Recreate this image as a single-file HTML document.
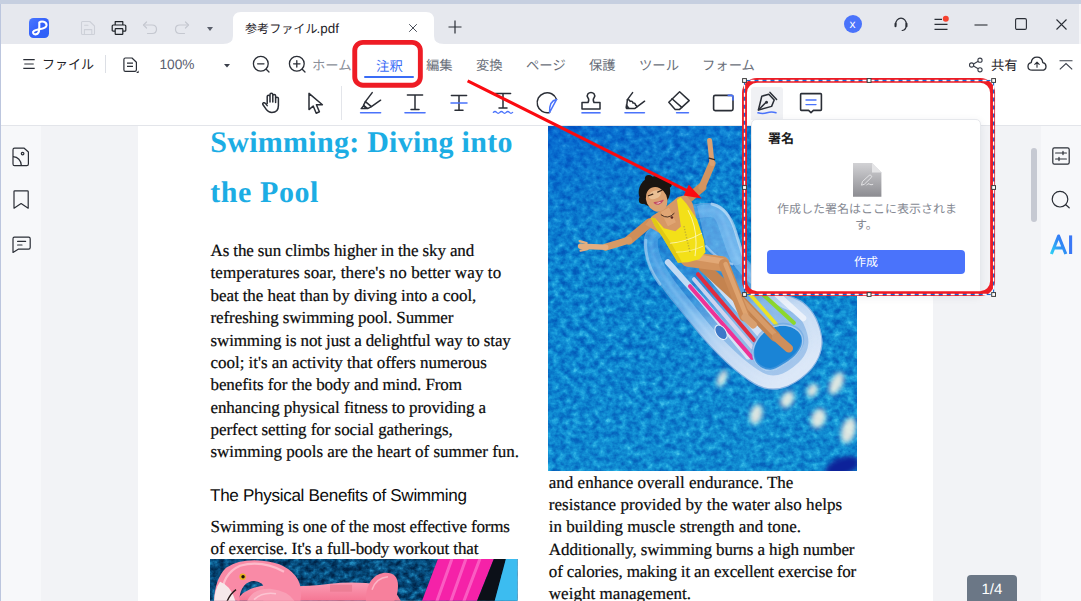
<!DOCTYPE html>
<html lang="ja">
<head>
<meta charset="utf-8">
<title>PDF editor</title>
<style>
*{box-sizing:border-box;margin:0;padding:0}
html,body{width:1081px;height:601px;overflow:hidden;background:#fff}
body{position:relative;font-family:"Liberation Sans",sans-serif;color:#1f2329;text-rendering:geometricPrecision}
.a{position:absolute;display:block}
.ic{position:absolute;overflow:visible}
.ic *{vector-effect:none}
.t{position:absolute;white-space:nowrap;line-height:1}
.bt{position:absolute;left:210.5px;white-space:nowrap;font-family:"Liberation Serif",serif;font-size:17px;line-height:20px;color:#0a0a0a;-webkit-text-stroke:0.22px #0a0a0a}
.rt{left:548.8px}
.jt{font-family:"Liberation Sans","Noto Sans CJK JP",sans-serif}
</style>
</head>
<body>

<!-- ======= window chrome ======= -->
<div class="a" id="topstrip" style="left:0;top:0;width:1081px;height:4px;background:#c6cfe0"></div>
<div class="a" id="titlebar" style="left:0;top:4px;width:1081px;height:40px;background:#e6e8ee"></div>
<div class="a" id="menubar" style="left:0;top:44px;width:1081px;height:82px;background:#fff;border-bottom:1px solid #e3e5ea"></div>
<div class="a" id="rightedge" style="left:1079px;top:4px;width:2px;height:40px;background:#f4f5f8"></div>

<!-- tab -->
<svg class="a" style="left:223px;top:10px" width="222" height="35" viewBox="223 10 222 35">
  <path d="M223 44 Q233 44 233 36 L233 20 Q233 12 241 12 L426 12 Q434 12 434 20 L434 36 Q434 44 444 44 L444 45 L223 45 Z" fill="#fff"/>
</svg>
<svg class="a" role="img" aria-label="参考ファイル" style="left:243.10px;top:20.09px;" width="76.60" height="18.15" viewBox="-2 -13.31 76.60 18.15"><text class="jt" x="0" y="0" font-size="12.1" fill="#1f2329">参考ファイル</text></svg>
<span class="t" style="left:316.6px;top:21.7px;font-size:13.4px;color:#1f2329">.pdf</span>
<svg class="ic" style="left:408px;top:23px" width="10" height="10" viewBox="0 0 10 10"><path d="M1.2 1.2 L8.8 8.8 M8.8 1.2 L1.2 8.8" stroke="#4a4f5a" stroke-width="1" fill="none"/></svg>
<svg class="ic" style="left:448px;top:20px" width="14" height="14" viewBox="0 0 14 14"><path d="M7 0.5 V13.5 M0.5 7 H13.5" stroke="#2a2e36" stroke-width="1.2" fill="none"/></svg>

<!-- logo -->
<svg class="ic" style="left:29px;top:18px" width="20" height="20" viewBox="0 0 20 20">
  <defs><linearGradient id="lg" x1="0" y1="0" x2="1" y2="1"><stop offset="0" stop-color="#4a78ff"/><stop offset="0.5" stop-color="#3460fb"/><stop offset="1" stop-color="#2c62f6"/></linearGradient></defs>
  <rect x="0" y="0" width="20" height="20" rx="4.5" fill="url(#lg)"/>
  <path d="M10.3 4.6 C12.2 2.7 17.9 3.3 17.5 7.4 C17.1 10.7 12.6 10.9 9 11.5 C5.6 12.1 3.5 13.3 4.1 15 C4.8 17 8.4 16.9 9.6 14.3 C10.5 12.2 10.3 8 10.3 4.6 Z" fill="none" stroke="#fff" stroke-width="2.1" stroke-linecap="round" stroke-linejoin="round"/>
</svg>
<!-- save (disabled) -->
<svg class="ic" style="left:80px;top:20px" width="16" height="16" viewBox="0 0 16 16" fill="none" stroke="#cdd0d8" stroke-width="1.05" stroke-linejoin="round" stroke-linecap="round">
  <path d="M2.5 1.5 H9.8 L14.5 6 V13.5 Q14.5 14.5 13.5 14.5 H2.5 Q1.5 14.5 1.5 13.5 V2.5 Q1.5 1.5 2.5 1.5 Z"/><path d="M4.6 5.2 H8"/><rect x="4.4" y="9.6" width="7.4" height="4.9"/>
</svg>
<!-- print -->
<svg class="ic" style="left:111px;top:20px" width="16" height="16" viewBox="0 0 16 16" fill="none" stroke="#1f2329" stroke-width="1.2" stroke-linejoin="round">
  <path d="M4.2 5 V1.7 H11.8 V5"/><path d="M4.2 11.2 H2.2 Q1.2 11.2 1.2 10.2 V6 Q1.2 5 2.2 5 H13.8 Q14.8 5 14.8 6 V10.2 Q14.8 11.2 13.8 11.2 H11.8"/><rect x="4.2" y="8.6" width="7.6" height="5.8" rx="0.6"/>
</svg>
<!-- undo / redo (disabled) -->
<svg class="ic" style="left:142px;top:20px" width="16" height="16" viewBox="0 0 16 16" fill="none" stroke="#c5c8d0" stroke-width="1.2" stroke-linecap="round" stroke-linejoin="round">
  <path d="M4.5 2 L1.5 5 L4.5 8"/><path d="M1.8 5 H10 Q14.5 5 14.5 9.2 Q14.5 13.5 10 13.5 H5.5"/>
</svg>
<svg class="ic" style="left:174px;top:20px" width="16" height="16" viewBox="0 0 16 16" fill="none" stroke="#c5c8d0" stroke-width="1.2" stroke-linecap="round" stroke-linejoin="round">
  <path d="M11.5 2 L14.5 5 L11.5 8"/><path d="M14.2 5 H6 Q1.5 5 1.5 9.2 Q1.5 13.5 6 13.5 H10.5"/>
</svg>
<svg class="ic" style="left:207px;top:26.5px" width="6" height="4" viewBox="0 0 6 4"><path d="M0 0 H6 L3 4 Z" fill="#5a5f6b"/></svg>

<!-- window controls -->
<div class="a" style="left:844px;top:15px;width:18.4px;height:18.4px;border-radius:50%;background:#4a73fb"></div>
<span class="t" style="left:849.6px;top:17.8px;font-size:12px;color:#fff">x</span>
<svg class="ic" style="left:893px;top:16.5px" width="16" height="16" viewBox="0 0 16 16" fill="none" stroke="#2a2e36" stroke-width="1.2" stroke-linecap="round">
  <path d="M2.7 7.9 V7 A5.3 5.9 0 0 1 13.3 7 V7.9 Q13.4 12.6 9.2 13.5"/><path d="M2.5 6.7 V9.3" stroke-width="2"/><path d="M13.5 6.7 V9.3" stroke-width="2"/>
</svg>
<svg class="ic" style="left:934px;top:15px" width="16" height="18" viewBox="0 0 16 18" fill="none" stroke="#2a2e36" stroke-width="1.2">
  <path d="M0.5 4.4 H8 M0.5 9.4 H13.5 M0.5 14.4 H13.5"/><circle cx="11.8" cy="3.8" r="3" fill="#f5412f" stroke="none"/>
</svg>
<svg class="ic" style="left:974px;top:23.5px" width="14" height="2" viewBox="0 0 14 2"><path d="M0.5 1 H13.5" stroke="#2a2e36" stroke-width="1.1"/></svg>
<svg class="ic" style="left:1015px;top:18px" width="12" height="12" viewBox="0 0 12 12"><rect x="0.6" y="0.6" width="10.8" height="10.8" rx="1.4" fill="none" stroke="#2a2e36" stroke-width="1.1"/></svg>
<svg class="ic" style="left:1056px;top:19px" width="11" height="11" viewBox="0 0 11 11"><path d="M0.5 0.5 L10.5 10.5 M10.5 0.5 L0.5 10.5" stroke="#2a2e36" stroke-width="1.1" fill="none"/></svg>

<!-- ======= menu row ======= -->
<svg class="ic" style="left:22.5px;top:58px" width="12" height="12" viewBox="0 0 12 12"><path d="M0.3 1.6 H11.7 M1.3 6 H10.7 M0.3 10.4 H11.7" stroke="#2a2e36" stroke-width="1.1" fill="none"/></svg>
<svg class="a" role="img" aria-label="ファイル" style="left:40.00px;top:55.20px;" width="56.00" height="19.50" viewBox="-2 -14.30 56.00 19.50"><text class="jt" x="0" y="0" font-size="13" fill="#1f2329">ファイル</text></svg>
<div class="a" style="left:105px;top:54.5px;width:1px;height:18.5px;background:#dcdfe5"></div>
<svg class="ic" style="left:122.5px;top:56.5px" width="16" height="17" viewBox="0 0 16 17" fill="none" stroke="#2a2e36" stroke-width="1.2" stroke-linejoin="round">
  <path d="M2.4 1 H9 L13.4 5.2 V12.8 Q13.4 14.4 11.8 14.4 H2.4 Q0.9 14.4 0.9 12.8 V2.5 Q0.9 1 2.4 1 Z"/><path d="M4 6.2 H10 M4 9.4 H10"/><path d="M15.6 13.6 V16 H13.2 Z" fill="#2a2e36" stroke="none"/>
</svg>
<span class="t" style="left:159.5px;top:57.8px;font-size:13.7px;color:#596070">100%</span>
<svg class="ic" style="left:224px;top:63.8px" width="6" height="4" viewBox="0 0 6 4"><path d="M0 0 H6 L3 3.6 Z" fill="#3a3f4a"/></svg>
<svg class="ic" style="left:252px;top:55px" width="19" height="19" viewBox="0 0 19 19" fill="none" stroke="#2a2e36" stroke-width="1.3" stroke-linecap="round">
  <circle cx="8.8" cy="8.8" r="7.4"/><path d="M5.6 8.8 H12 M14.2 14.2 L17 17"/>
</svg>
<svg class="ic" style="left:288px;top:55px" width="19" height="19" viewBox="0 0 19 19" fill="none" stroke="#2a2e36" stroke-width="1.3" stroke-linecap="round">
  <circle cx="8.8" cy="8.8" r="7.4"/><path d="M5.6 8.8 H12 M8.8 5.6 V12 M14.2 14.2 L17 17"/>
</svg>
<svg class="a" role="img" aria-label="ホーム" style="left:310.20px;top:55.34px;" width="43.99" height="20.00" viewBox="-2 -14.66 43.99 20.00"><text class="jt" x="0" y="0" font-size="13.33" fill="#8a8f99">ホーム</text></svg>
<svg class="a" role="img" aria-label="注釈" style="left:373.80px;top:55.66px;" width="30.80" height="20.10" viewBox="-2 -14.74 30.80 20.10"><text class="jt" x="0" y="0" font-size="13.4" fill="#3a6cf6">注釈</text></svg>
<div class="a" style="left:364.2px;top:76px;width:49.8px;height:2px;background:#3a6cf6;border-radius:1px"></div>
<svg class="a" role="img" aria-label="編集" style="left:424.00px;top:55.34px;" width="30.66" height="20.00" viewBox="-2 -14.66 30.66 20.00"><text class="jt" x="0" y="0" font-size="13.33" fill="#6a6f7a">編集</text></svg><svg class="a" role="img" aria-label="変換" style="left:474.00px;top:55.34px;" width="30.66" height="20.00" viewBox="-2 -14.66 30.66 20.00"><text class="jt" x="0" y="0" font-size="13.33" fill="#6a6f7a">変換</text></svg><svg class="a" role="img" aria-label="ページ" style="left:524.00px;top:55.34px;" width="43.99" height="20.00" viewBox="-2 -14.66 43.99 20.00"><text class="jt" x="0" y="0" font-size="13.33" fill="#6a6f7a">ページ</text></svg><svg class="a" role="img" aria-label="保護" style="left:587.00px;top:55.34px;" width="30.66" height="20.00" viewBox="-2 -14.66 30.66 20.00"><text class="jt" x="0" y="0" font-size="13.33" fill="#6a6f7a">保護</text></svg><svg class="a" role="img" aria-label="ツール" style="left:637.00px;top:55.34px;" width="43.99" height="20.00" viewBox="-2 -14.66 43.99 20.00"><text class="jt" x="0" y="0" font-size="13.33" fill="#6a6f7a">ツール</text></svg><svg class="a" role="img" aria-label="フォーム" style="left:700.00px;top:55.34px;" width="57.32" height="20.00" viewBox="-2 -14.66 57.32 20.00"><text class="jt" x="0" y="0" font-size="13.33" fill="#6a6f7a">フォーム</text></svg>
<!-- share -->
<svg class="ic" style="left:968px;top:56.5px" width="16" height="16" viewBox="0 0 16 16" fill="none" stroke="#3a3f4a" stroke-width="1.1">
  <circle cx="3.6" cy="8" r="2.1"/><circle cx="12" cy="3.2" r="2.1"/><circle cx="12" cy="12.8" r="2.1"/><path d="M5.5 7 L10.2 4.2 M5.5 9 L10.2 11.8"/>
</svg>
<svg class="a" role="img" aria-label="共有" style="left:989.00px;top:55.34px;" width="30.66" height="20.00" viewBox="-2 -14.66 30.66 20.00"><text class="jt" x="0" y="0" font-size="13.33" fill="#1f2329">共有</text></svg>
<svg class="ic" style="left:1027px;top:56px" width="20" height="16" viewBox="0 0 20 16" fill="none" stroke="#2a2e36" stroke-width="1.3" stroke-linecap="round" stroke-linejoin="round">
  <path d="M5.2 14.2 Q1 14.2 1 10.4 Q1 7.2 4.2 6.6 Q5 1.2 10 1.2 Q15 1.2 15.8 6.6 Q19 7.2 19 10.4 Q19 14.2 14.8 14.2 Z"/><path d="M10 11.2 V6.4 M7.8 8.4 L10 6.2 L12.2 8.4" stroke-width="1.1"/>
</svg>
<svg class="ic" style="left:1059px;top:57px" width="14" height="14" viewBox="0 0 14 14" fill="none" stroke="#3a3f4a" stroke-width="1.1"><path d="M0.5 3.7 H13.5 M0.8 12.4 L7 6.6 L13.2 12.4"/></svg>

<!-- ======= annotation toolbar icons ======= -->
<!-- hand -->
<svg class="ic" style="left:261px;top:92px" width="21" height="22" viewBox="0 0 21 22" fill="none" stroke="#2a2e36" stroke-width="1.5" stroke-linecap="round" stroke-linejoin="round">
  <path d="M6.2 11.5 V4.6 Q6.2 3.2 7.6 3.2 Q9 3.2 9 4.6 V10 M9 9.8 V2.6 Q9 1.2 10.4 1.2 Q11.8 1.2 11.8 2.6 V10 M11.8 10 V3.8 Q11.8 2.5 13.2 2.5 Q14.6 2.5 14.6 3.8 V10.6 M14.6 10.6 V6.6 Q14.6 5.3 16 5.3 Q17.4 5.3 17.4 6.6 V13.4 Q17.4 20.4 10.8 20.4 Q7.4 20.4 5.4 17.6 L2 12.8 Q1.2 11.4 2.4 10.8 Q3.6 10.3 4.6 11.6 L6.2 13.6"/>
</svg>
<!-- cursor -->
<svg class="ic" style="left:307px;top:92px" width="18" height="23" viewBox="0 0 18 23" fill="none" stroke="#2a2e36" stroke-width="1.5" stroke-linejoin="round">
  <path d="M2 1.4 V17.6 L6.2 14 L9.2 21.2 L12.4 19.8 L9.4 12.8 L15.4 12.8 Z"/>
</svg>
<div class="a" style="left:341px;top:86px;width:1px;height:34px;background:#e3e5ea"></div>
<!-- highlighter -->
<svg class="ic" style="left:360px;top:91px" width="22" height="24" viewBox="0 0 22 24" fill="none" stroke="#2a2e36" stroke-width="1.5" stroke-linecap="round" stroke-linejoin="round">
  <path d="M12.2 1.6 L5.4 10.6 L11.4 15.6 L20.6 9.2"/><path d="M5.4 10.6 L3.6 14.2 L7.6 17.6 L11.4 15.6"/><path d="M3.6 14.6 L1.2 17.6 H6.6 Z"/>
  <path d="M0.6 21.8 H20.6" stroke="#4a73fb" stroke-width="1.6"/>
</svg>
<!-- T underline -->
<svg class="ic" style="left:404px;top:91px" width="22" height="24" viewBox="0 0 22 24" fill="none" stroke="#2a2e36" stroke-width="1.5" stroke-linecap="round">
  <path d="M3.4 4 H18.6 M11 4 V18.2 M7 18.4 H15"/><path d="M1 21.8 H21" stroke="#4a73fb" stroke-width="1.6"/>
</svg>
<!-- T strike -->
<svg class="ic" style="left:448px;top:91px" width="22" height="24" viewBox="0 0 22 24" fill="none" stroke="#2a2e36" stroke-width="1.5" stroke-linecap="round">
  <path d="M3.4 4.6 H18.6 M11 4.6 V19 M7 19.2 H15"/><path d="M3 12 H19" stroke="#4a73fb" stroke-width="1.5"/>
</svg>
<!-- T squiggle -->
<svg class="ic" style="left:492px;top:91px" width="22" height="24" viewBox="0 0 22 24" fill="none" stroke="#2a2e36" stroke-width="1.5" stroke-linecap="round">
  <path d="M3.4 2.6 H18.6 M11 2.6 V16.8 M7 17 H15"/><path d="M1.4 21.4 Q3 19.6 4.6 21.4 T7.8 21.4 T11 21.4 T14.2 21.4 T17.4 21.4 T20.6 21.4" stroke="#4a73fb" stroke-width="1.3"/>
</svg>
<!-- sticker -->
<svg class="ic" style="left:535px;top:91px" width="24" height="24" viewBox="0 0 24 24" fill="none" stroke="#2a2e36" stroke-width="1.5" stroke-linecap="round" stroke-linejoin="round">
  <path d="M21.6 8.4 A10 10 0 1 0 14.6 21.4"/><path d="M21.6 8.4 Q14 9.6 14.6 21.4 Z" stroke="#4a73fb"/>
</svg>
<!-- stamp -->
<svg class="ic" style="left:580px;top:91px" width="22" height="24" viewBox="0 0 22 24" fill="none" stroke="#2a2e36" stroke-width="1.5" stroke-linejoin="round">
  <path d="M8 11.6 Q9.6 8.6 7.8 6.6 Q6.6 4.6 8 2.8 Q9.2 1.4 11 1.4 Q12.8 1.4 14 2.8 Q15.4 4.6 14.2 6.6 Q12.4 8.6 14 11.6 H20 V18 H2 V11.6 Z"/><path d="M1.4 21.8 H20.6" stroke="#4a73fb" stroke-width="1.6"/>
</svg>
<!-- pencil draw -->
<svg class="ic" style="left:624px;top:91px" width="22" height="24" viewBox="0 0 22 24" fill="none" stroke="#2a2e36" stroke-width="1.5" stroke-linecap="round" stroke-linejoin="round">
  <path d="M8.6 1.6 L3.4 8.6 L2.4 17.4 H11 L20.6 10.2"/><path d="M3.4 8.8 Q5.4 8.2 6.2 10.4 Q8.4 9.6 9 12 Q11.2 11.6 11.6 14.2 Q13 14.4 12.6 16"/>
  <path d="M2.6 14 L5 16.8 H2.4 Z" fill="#2a2e36" stroke-width="1"/>
  <path d="M1 21.8 H20.4" stroke="#4a73fb" stroke-width="1.6"/>
</svg>
<!-- eraser -->
<svg class="ic" style="left:667px;top:90px" width="24" height="25" viewBox="0 0 24 25" fill="none" stroke="#2a2e36" stroke-width="1.5" stroke-linejoin="round" stroke-linecap="round">
  <path d="M12.6 1.8 L22.2 10.6 L12.6 19.4 H8.2 L1.8 12.2 Z"/><path d="M5 8.8 L14.8 17.4"/><path d="M9.6 22.8 H21.4" stroke="#4a73fb" stroke-width="1.6"/>
</svg>
<!-- rectangle -->
<svg class="ic" style="left:712px;top:93px" width="23" height="19" viewBox="0 0 23 19" fill="none" stroke-width="1.6" stroke-linejoin="round">
  <rect x="1.6" y="2.4" width="19.4" height="15.2" rx="1.6" stroke="#2a2e36"/><path d="M15.6 2.4 H19.4 Q21 2.4 21 4 V7.6" stroke="#4a73fb"/>
</svg>

<!-- ======= left / right side bars & canvas ======= -->
<div class="a" id="canvas" style="left:0;top:126px;width:1081px;height:475px;background:#f2f3f6"></div>
<div class="a" id="leftbar" style="left:0;top:126px;width:41px;height:475px;background:#f7f8fa"></div>
<div class="a" id="leftedge" style="left:0;top:4px;width:1px;height:597px;background:#bcc6de"></div>
<div class="a" id="rightbar" style="left:1041px;top:126px;width:40px;height:475px;background:#f7f8fa"></div>
<div class="a" id="pagebg" style="left:138px;top:126px;width:795px;height:475px;background:#fff"></div>

<!-- left bar icons -->
<svg class="ic" style="left:12px;top:146.5px" width="18" height="20" viewBox="0 0 18 20" fill="none" stroke="#2a2e36" stroke-width="1.2" stroke-linejoin="round">
  <path d="M2.6 1.2 H12.2 L16.4 5 V17 Q16.4 18.6 14.8 18.6 H2.6 Q1 18.6 1 17 V2.8 Q1 1.2 2.6 1.2 Z"/><path d="M1 9.6 Q8.6 10.2 9.4 18.6"/><circle cx="10.6" cy="6.6" r="1.3"/>
</svg>
<svg class="ic" style="left:12.5px;top:190px" width="17" height="20" viewBox="0 0 17 20" fill="none" stroke="#2a2e36" stroke-width="1.2" stroke-linejoin="round">
  <path d="M1 1.6 Q1 0.8 1.8 0.8 H14.4 Q15.2 0.8 15.2 1.6 V18.2 L8.1 13.6 L1 18.2 Z"/>
</svg>
<svg class="ic" style="left:11.5px;top:236px" width="20" height="18" viewBox="0 0 20 18" fill="none" stroke="#2a2e36" stroke-width="1.2" stroke-linejoin="round" stroke-linecap="round">
  <path d="M2.4 1.2 H16.6 Q18.2 1.2 18.2 2.8 V11.6 Q18.2 13.2 16.6 13.2 H6.2 L1 16.4 L1 2.8 Q1 1.2 2.4 1.2 Z"/><path d="M5.6 5.4 H13.6 M5.6 9 H10"/>
</svg>

<!-- right bar -->
<div class="a" style="left:1031px;top:148px;width:6px;height:74px;border-radius:3px;background:#c6c9d2"></div>
<svg class="ic" style="left:1051.5px;top:146.5px" width="18" height="18" viewBox="0 0 18 18" fill="none" stroke="#2a2e36" stroke-width="1.2" stroke-linecap="round">
  <rect x="0.8" y="0.8" width="16.4" height="16.4" rx="1.6"/><path d="M3.6 6 H14.4 M3.6 12 H14.4 M11 4.4 V7.6 M7 10.4 V13.6"/>
</svg>
<svg class="ic" style="left:1051px;top:190px" width="20" height="20" viewBox="0 0 20 20" fill="none" stroke="#2a2e36" stroke-width="1.2" stroke-linecap="round">
  <circle cx="9" cy="9.2" r="7.8"/><path d="M14.8 14.8 L18.2 17.8"/>
</svg>
<svg class="ic" style="left:1050px;top:234px" width="24" height="22" viewBox="0 0 24 22">
  <defs><linearGradient id="ai" x1="0" y1="1" x2="1" y2="0"><stop offset="0" stop-color="#2fd0f5"/><stop offset="0.55" stop-color="#2f8df5"/><stop offset="1" stop-color="#3a6cf6"/></linearGradient></defs>
  <path d="M1.4 20 L8.6 2 L15.8 20 M4.2 14 H13" fill="none" stroke="url(#ai)" stroke-width="3.1" stroke-linejoin="round" stroke-linecap="butt"/>
  <path d="M20.6 1.4 V20" fill="none" stroke="#3a78f6" stroke-width="3.1"/>
</svg>

<!-- page badge -->
<div class="a" style="left:967px;top:575px;width:50px;height:30px;border-radius:4px;background:#6b7786"></div>
<span class="t" style="left:981.4px;top:582.4px;font-size:15px;color:#fff">1/4</span>

<!-- ======= document content ======= -->
<div id="doc">
<span class="t" id="h1a" style="letter-spacing:0.271px;left:210.3px;top:127.8px;font-family:'Liberation Serif',serif;font-weight:bold;font-size:30px;color:#1cade4;line-height:30px">Swimming: Diving into</span>
<span class="t" id="h1b" style="letter-spacing:0.555px;left:210.3px;top:178.4px;font-family:'Liberation Serif',serif;font-weight:bold;font-size:30px;color:#1cade4;line-height:30px">the Pool</span>

<span class="bt" style="letter-spacing:-0.118px;top:241.05px">As the sun climbs higher in the sky and</span>
<span class="bt" style="letter-spacing:0.110px;top:263.42px">temperatures soar, there's no better way to</span>
<span class="bt" style="letter-spacing:-0.069px;top:285.79px">beat the heat than by diving into a cool,</span>
<span class="bt" style="letter-spacing:-0.082px;top:308.16px">refreshing swimming pool. Summer</span>
<span class="bt" style="letter-spacing:-0.129px;top:330.53px">swimming is not just a delightful way to stay</span>
<span class="bt" style="letter-spacing:-0.026px;top:352.90px">cool; it's an activity that offers numerous</span>
<span class="bt" style="letter-spacing:-0.086px;top:375.27px">benefits for the body and mind. From</span>
<span class="bt" style="letter-spacing:-0.086px;top:397.64px">enhancing physical fitness to providing a</span>
<span class="bt" style="letter-spacing:-0.049px;top:420.01px">perfect setting for social gatherings,</span>
<span class="bt" style="letter-spacing:-0.028px;top:442.38px">swimming pools are the heart of summer fun.</span>

<span class="t" id="h2" style="letter-spacing:-0.314px;left:210px;top:486px;font-size:17.1px;color:#0c0c0c;line-height:20px">The Physical Benefits of Swimming</span>

<span class="bt" style="letter-spacing:-0.181px;top:516.85px">Swimming is one of the most effective forms</span>
<span class="bt" style="letter-spacing:-0.113px;top:539.05px">of exercise. It's a full-body workout that</span>

<span class="bt rt" style="letter-spacing:-0.001px;top:472.5px">and enhance overall endurance. The</span>
<span class="bt rt" style="letter-spacing:0.038px;top:494.8px">resistance provided by the water also helps</span>
<span class="bt rt" style="letter-spacing:0.002px;top:517px">in building muscle strength and tone.</span>
<span class="bt rt" style="letter-spacing:-0.095px;top:539.5px">Additionally, swimming burns a high number</span>
<span class="bt rt" style="letter-spacing:-0.149px;top:561.9px">of calories, making it an excellent exercise for</span>
<span class="bt rt" style="letter-spacing:0.038px;top:584.2px">weight management.</span>
</div>

<svg class="a" id="pool" style="left:548.2px;top:126px" width="309" height="345" viewBox="548.5 126 308 344.5" preserveAspectRatio="none">
  <defs>
    <filter id="wf" x="0" y="0" width="100%" height="100%" color-interpolation-filters="sRGB">
      <feTurbulence type="fractalNoise" baseFrequency="0.15 0.16" numOctaves="3" seed="7" result="n"/>
      <feColorMatrix in="n" type="matrix" values="1.45 0 0 0 -0.27  1.45 0 0 0 -0.27  1.45 0 0 0 -0.27  0 0 0 0 1" result="g"/>
      <feComponentTransfer in="g">
        <feFuncR type="table" tableValues="0.01 0.02 0.03 0.05 0.07 0.11 0.18 0.28"/>
        <feFuncG type="table" tableValues="0.35 0.40 0.455 0.515 0.57 0.63 0.70 0.78"/>
        <feFuncB type="table" tableValues="0.72 0.75 0.78 0.81 0.84 0.87 0.90 0.94"/>
      </feComponentTransfer>
    </filter>
    <filter id="b05" x="-20%" y="-20%" width="140%" height="140%"><feGaussianBlur stdDeviation="0.6"/></filter>
    <filter id="b1" x="-20%" y="-20%" width="140%" height="140%"><feGaussianBlur stdDeviation="1.2"/></filter>
    <filter id="b2" x="-20%" y="-20%" width="140%" height="140%"><feGaussianBlur stdDeviation="2.5"/></filter>
    <filter id="b4" x="-30%" y="-30%" width="160%" height="160%"><feGaussianBlur stdDeviation="5"/></filter>
    <linearGradient id="wg" x1="0" y1="0" x2="0.35" y2="1">
      <stop offset="0" stop-color="#0040d0" stop-opacity=".42"/><stop offset="0.42" stop-color="#0868cc" stop-opacity=".06"/><stop offset="1" stop-color="#28a8d4" stop-opacity=".12"/>
    </linearGradient>
    <linearGradient id="fb" gradientUnits="userSpaceOnUse" x1="690" y1="215" x2="795" y2="372">
      <stop offset="0" stop-color="#3c9cec" stop-opacity=".30"/><stop offset="0.35" stop-color="#5eaaee" stop-opacity=".42"/><stop offset="0.6" stop-color="#9cc2ec" stop-opacity=".85"/><stop offset="1" stop-color="#aecbee" stop-opacity=".95"/>
    </linearGradient>
    <linearGradient id="ft" gradientUnits="userSpaceOnUse" x1="690" y1="215" x2="795" y2="372">
      <stop offset="0" stop-color="#7cc2f8" stop-opacity=".34"/><stop offset="0.4" stop-color="#9cd0f8" stop-opacity=".5"/><stop offset="0.7" stop-color="#c8dcf4" stop-opacity=".92"/><stop offset="1" stop-color="#dce8f8" stop-opacity="1"/>
    </linearGradient>
    <clipPath id="pc"><rect x="548.5" y="126" width="308" height="344.5"/></clipPath>
    <clipPath id="fc"><path d="M712.0 203.0 C719.8 203.7 723.2 207.2 727.0 212.0 C730.8 216.8 732.2 224.8 735.0 232.0 C737.8 239.2 739.5 247.8 744.0 255.0 C748.5 262.2 755.2 268.7 762.0 275.0 C768.8 281.3 778.2 288.5 785.0 293.0 C791.8 297.5 797.8 297.8 803.0 302.0 C808.2 306.2 812.8 311.0 816.0 318.0 C819.2 325.0 822.7 335.7 822.0 344.0 C821.3 352.3 817.7 361.0 812.0 368.0 C806.3 375.0 796.0 382.7 788.0 386.0 C780.0 389.3 772.0 390.0 764.0 388.0 C756.0 386.0 749.0 381.0 740.0 374.0 C731.0 367.0 720.0 356.7 710.0 346.0 C700.0 335.3 688.3 320.3 680.0 310.0 C671.7 299.7 665.3 292.0 660.0 284.0 C654.7 276.0 650.7 269.3 648.0 262.0 C645.3 254.7 643.3 246.0 644.0 240.0 C644.7 234.0 646.0 231.3 652.0 226.0 C658.0 220.7 670.0 211.8 680.0 208.0 C690.0 204.2 704.2 202.3 712.0 203.0Z"/></clipPath>
  </defs>
  <g clip-path="url(#pc)">
    <rect x="548.5" y="126" width="308" height="344.5" fill="#0f80cf"/>
    <rect x="548.5" y="126" width="308" height="344.5" filter="url(#wf)"/>
    <rect x="548.5" y="126" width="308" height="344.5" fill="url(#wg)"/>

    <!-- sun reflections bottom-right -->
    <g filter="url(#b2)" fill="#f4f2e4" opacity=".9">
      <ellipse cx="722" cy="378" rx="4" ry="9" transform="rotate(25 722 378)"/>
      <ellipse cx="756" cy="414" rx="6" ry="10" transform="rotate(15 756 414)"/>
      <ellipse cx="787" cy="399" rx="6" ry="9" transform="rotate(30 787 399)"/>
      <ellipse cx="818" cy="418" rx="7" ry="10" transform="rotate(20 818 418)"/>
      <ellipse cx="836" cy="383" rx="6" ry="12" transform="rotate(25 836 383)"/>
      <ellipse cx="848" cy="430" rx="7" ry="13" transform="rotate(15 848 430)"/>
      <ellipse cx="812" cy="390" rx="5" ry="7" transform="rotate(30 812 390)"/>
    </g>
    <ellipse cx="842" cy="466" rx="18" ry="9" fill="#10249a" filter="url(#b2)" transform="rotate(-20 842 466)"/>

    <!-- float -->
    <path d="M712.0 203.0 C719.8 203.7 723.2 207.2 727.0 212.0 C730.8 216.8 732.2 224.8 735.0 232.0 C737.8 239.2 739.5 247.8 744.0 255.0 C748.5 262.2 755.2 268.7 762.0 275.0 C768.8 281.3 778.2 288.5 785.0 293.0 C791.8 297.5 797.8 297.8 803.0 302.0 C808.2 306.2 812.8 311.0 816.0 318.0 C819.2 325.0 822.7 335.7 822.0 344.0 C821.3 352.3 817.7 361.0 812.0 368.0 C806.3 375.0 796.0 382.7 788.0 386.0 C780.0 389.3 772.0 390.0 764.0 388.0 C756.0 386.0 749.0 381.0 740.0 374.0 C731.0 367.0 720.0 356.7 710.0 346.0 C700.0 335.3 688.3 320.3 680.0 310.0 C671.7 299.7 665.3 292.0 660.0 284.0 C654.7 276.0 650.7 269.3 648.0 262.0 C645.3 254.7 643.3 246.0 644.0 240.0 C644.7 234.0 646.0 231.3 652.0 226.0 C658.0 220.7 670.0 211.8 680.0 208.0 C690.0 204.2 704.2 202.3 712.0 203.0Z" fill="#1c6cc0" opacity=".35" filter="url(#b2)" transform="translate(2 3)"/>
    <path d="M712.0 203.0 C719.8 203.7 723.2 207.2 727.0 212.0 C730.8 216.8 732.2 224.8 735.0 232.0 C737.8 239.2 739.5 247.8 744.0 255.0 C748.5 262.2 755.2 268.7 762.0 275.0 C768.8 281.3 778.2 288.5 785.0 293.0 C791.8 297.5 797.8 297.8 803.0 302.0 C808.2 306.2 812.8 311.0 816.0 318.0 C819.2 325.0 822.7 335.7 822.0 344.0 C821.3 352.3 817.7 361.0 812.0 368.0 C806.3 375.0 796.0 382.7 788.0 386.0 C780.0 389.3 772.0 390.0 764.0 388.0 C756.0 386.0 749.0 381.0 740.0 374.0 C731.0 367.0 720.0 356.7 710.0 346.0 C700.0 335.3 688.3 320.3 680.0 310.0 C671.7 299.7 665.3 292.0 660.0 284.0 C654.7 276.0 650.7 269.3 648.0 262.0 C645.3 254.7 643.3 246.0 644.0 240.0 C644.7 234.0 646.0 231.3 652.0 226.0 C658.0 220.7 670.0 211.8 680.0 208.0 C690.0 204.2 704.2 202.3 712.0 203.0Z" fill="url(#fb)"/>
    <g clip-path="url(#fc)">
      <path d="M711.4 210.5 C717.8 210.7 718.3 212.6 721.1 216.7 C723.9 220.7 725.3 227.7 728.0 234.8 C730.8 241.8 732.8 251.4 737.6 259.0 C742.5 266.6 749.7 273.8 756.9 280.5 C764.1 287.2 774.0 294.7 780.9 299.3 C787.8 303.8 793.6 304.2 798.3 307.8 C803.0 311.5 806.5 315.2 809.2 321.1 C811.9 327.0 815.0 336.4 814.5 343.4 C814.0 350.4 811.1 357.3 806.2 363.3 C801.3 369.2 791.8 376.2 785.1 379.1 C778.4 382.0 772.6 382.6 765.8 380.7 C759.1 378.9 753.0 374.7 744.6 368.1 C736.2 361.4 725.3 351.3 715.5 340.9 C705.7 330.4 694.0 315.5 685.8 305.3 C677.6 295.1 671.4 287.5 666.2 279.8 C661.1 272.2 657.5 265.9 655.0 259.4 C652.6 252.9 651.1 245.5 651.5 240.8 C651.8 236.2 651.8 235.9 657.0 231.6 C662.2 227.3 673.6 218.5 682.7 215.0 C691.7 211.5 705.0 210.2 711.4 210.5Z" fill="none" stroke="url(#ft)" stroke-width="13" filter="url(#b05)"/>
      <path d="M711.4 210.5 C717.8 210.7 718.3 212.6 721.1 216.7 C723.9 220.7 725.3 227.7 728.0 234.8 C730.8 241.8 732.8 251.4 737.6 259.0 C742.5 266.6 749.7 273.8 756.9 280.5 C764.1 287.2 774.0 294.7 780.9 299.3 C787.8 303.8 793.6 304.2 798.3 307.8 C803.0 311.5 806.5 315.2 809.2 321.1 C811.9 327.0 815.0 336.4 814.5 343.4 C814.0 350.4 811.1 357.3 806.2 363.3 C801.3 369.2 791.8 376.2 785.1 379.1 C778.4 382.0 772.6 382.6 765.8 380.7 C759.1 378.9 753.0 374.7 744.6 368.1 C736.2 361.4 725.3 351.3 715.5 340.9 C705.7 330.4 694.0 315.5 685.8 305.3 C677.6 295.1 671.4 287.5 666.2 279.8 C661.1 272.2 657.5 265.9 655.0 259.4 C652.6 252.9 651.1 245.5 651.5 240.8 C651.8 236.2 651.8 235.9 657.0 231.6 C662.2 227.3 673.6 218.5 682.7 215.0 C691.7 211.5 705.0 210.2 711.4 210.5Z" fill="none" stroke="url(#ft)" stroke-width="3.4" opacity=".9" filter="url(#b1)"/>
      <path d="M712.0 203.0 C719.8 203.7 723.2 207.2 727.0 212.0 C730.8 216.8 732.2 224.8 735.0 232.0 C737.8 239.2 739.5 247.8 744.0 255.0 C748.5 262.2 755.2 268.7 762.0 275.0 C768.8 281.3 778.2 288.5 785.0 293.0 C791.8 297.5 797.8 297.8 803.0 302.0 C808.2 306.2 812.8 311.0 816.0 318.0 C819.2 325.0 822.7 335.7 822.0 344.0 C821.3 352.3 817.7 361.0 812.0 368.0 C806.3 375.0 796.0 382.7 788.0 386.0 C780.0 389.3 772.0 390.0 764.0 388.0 C756.0 386.0 749.0 381.0 740.0 374.0 C731.0 367.0 720.0 356.7 710.0 346.0 C700.0 335.3 688.3 320.3 680.0 310.0 C671.7 299.7 665.3 292.0 660.0 284.0 C654.7 276.0 650.7 269.3 648.0 262.0 C645.3 254.7 643.3 246.0 644.0 240.0 C644.7 234.0 646.0 231.3 652.0 226.0 C658.0 220.7 670.0 211.8 680.0 208.0 C690.0 204.2 704.2 202.3 712.0 203.0Z" fill="none" stroke="#7aa8dc" stroke-width="2" opacity=".6"/>
      <!-- stripes -->
      <g stroke-linecap="round" fill="none">
        <path d="M668 262 L702 300 L748 356" stroke="#e8eefa" stroke-width="6" opacity=".8"/>
        <path d="M690 286 L752 357.5" stroke="#ee3296" stroke-width="4"/>
        <path d="M694 279 L752 347" stroke="#dcd8f0" stroke-width="4" opacity=".9"/>
        <path d="M698 274 L754 340" stroke="#e02c40" stroke-width="4"/>
        <path d="M706 270 L760 334" stroke="#e2eaf8" stroke-width="7" opacity=".85"/>
        <path d="M748 292 L776.5 324.5" stroke="#ebe226" stroke-width="3.6"/>
        <path d="M756 288 L793.5 322.5" stroke="#8cd72c" stroke-width="4"/>
        <path d="M770 288 L803 318" stroke="#eef3fb" stroke-width="6" opacity=".9"/>
      </g>
      <ellipse cx="721" cy="332" rx="5" ry="8" fill="#3c78c8" stroke="#e8f0fa" stroke-width="1" transform="rotate(-35 721 332)"/>
    </g>
    <path d="M752.8 352.4 C752.8 348.2 754.8 343.1 757.2 339.2 C759.6 335.4 762.7 331.7 767.1 329.4 C771.5 327.0 778.5 324.8 783.6 324.9 C788.7 325.1 794.8 327.7 797.9 330.4 C801.0 333.2 802.5 337.6 802.3 341.4 C802.1 345.3 799.7 349.9 796.8 353.6 C793.9 357.2 789.1 360.7 784.7 363.4 C780.3 366.2 775.0 369.9 770.4 370.1 C765.8 370.2 760.1 367.5 757.2 364.6 C754.3 361.6 752.8 356.7 752.8 352.4Z" fill="#1a84d6" stroke="#eef4fc" stroke-width="1.2"/>
    <path d="M752.8 352.4 C752.8 348.2 754.8 343.1 757.2 339.2 C759.6 335.4 762.7 331.7 767.1 329.4 C771.5 327.0 778.5 324.8 783.6 324.9 C788.7 325.1 794.8 327.7 797.9 330.4 C801.0 333.2 802.5 337.6 802.3 341.4 C802.1 345.3 799.7 349.9 796.8 353.6 C793.9 357.2 789.1 360.7 784.7 363.4 C780.3 366.2 775.0 369.9 770.4 370.1 C765.8 370.2 760.1 367.5 757.2 364.6 C754.3 361.6 752.8 356.7 752.8 352.4Z" fill="none" stroke="#5d9fe0" stroke-width="3" opacity=".5" transform="translate(0 -1)"/>

    <!-- head-rest cushion -->
    <path d="M697 206 Q716 200 728 214 Q738 232 744 256 Q742 268 730 264 Q716 258 706 246 Z" fill="#9ccdf6" opacity=".38"/>
    <path d="M712 204 Q728 208 735 230 Q741 250 744 258" fill="none" stroke="#d6ecfc" stroke-width="3" opacity=".6" filter="url(#b05)" stroke-linecap="round"/>
    <path d="M706 246 Q718 260 732 264" fill="none" stroke="#cfe6fa" stroke-width="2.4" opacity=".55" filter="url(#b05)" stroke-linecap="round"/>
    <path d="M646 240 Q644 262 660 284" fill="none" stroke="#b8dcf8" stroke-width="3" opacity=".55" filter="url(#b05)" stroke-linecap="round"/>
    <!-- woman -->
    <g stroke-linecap="round" stroke-linejoin="round" fill="none">
      <!-- far leg -->
      <path d="M704 267 L740 300 L775 336" stroke="#c4834f" stroke-width="10.5"/>
      <path d="M742 300 L774 333.5" stroke="#dba06c" stroke-width="5" opacity=".85"/>
      <path d="M776 337 L788.5 348" stroke="#cf8f5c" stroke-width="8.5"/>
      <!-- near leg -->
      <path d="M688 259 L722 263.5" stroke="#d3935e" stroke-width="15"/>
      <path d="M690 256 L722 261" stroke="#e6ae7c" stroke-width="6" opacity=".8"/>
      <path d="M724 264 L744.5 316" stroke="#cc8b57" stroke-width="10.5"/>
      <path d="M725.5 264 L746 315" stroke="#e2a874" stroke-width="4.5" opacity=".85"/>
      <path d="M745 317 L753 324.5" stroke="#d9a070" stroke-width="7.5"/>
      <!-- right arm (up) -->
      <path d="M687 199.5 L702 187" stroke="#cd8a56" stroke-width="9"/>
      <path d="M702 187 L712 163.5" stroke="#d49460" stroke-width="7"/>
      <path d="M712 163.5 L709.6 140.5" stroke="#dca070" stroke-width="5"/>
      <path d="M709 158 L714.5 159.5" stroke="#3a2a22" stroke-width="1.3"/>
      <!-- left arm -->
      <path d="M650 222.5 L629 240" stroke="#d08e58" stroke-width="9"/>
      <path d="M629 240 L606 247" stroke="#d89a64" stroke-width="7"/>
      <path d="M606 247 L581 246" stroke="#e4ae80" stroke-width="5.5"/>
      <path d="M587 243 L580 241 M588 249 L581 250.5" stroke="#e4ae80" stroke-width="2.2"/>
    </g>
    <!-- torso skin -->
    <path d="M645.5 224.5 L652 216 L660 211 L667 206 L678 197 L686 195 L692.5 203 L696 216 L680 233 L660 233 Z" fill="#d79864"/>
    <path d="M661 212 L669 207.5 L676 222 L668 226 Z" fill="#e3aa78" opacity=".8"/>
    <!-- swimsuit -->
    <path d="M651 217.6 L655 217.8 L664 228 L675.5 231 L681 226.4 L677 200 L680.6 197 L686.4 203.4 L697 219 L704 240 L705.5 252 L699.4 259 L688 262 L678 262.6 L671 251 L662 236 L655 226 Z" fill="#f3e018"/>
    <path d="M651 217.6 L655 226 L662 236 L671 251 L678 262.6 L682 262 L672 244 L660 226 L655 217.8 Z" fill="#dcc314" opacity=".8"/>
    <path d="M688 210 Q699 230 695 256" stroke="#fdf8c4" stroke-width="1" fill="none" opacity=".85"/>
    <path d="M670 243 Q686 242 702 233" stroke="#fdf8c4" stroke-width="1" fill="none" opacity=".8"/>
    <path d="M676 252 Q690 252 703 246" stroke="#fdf8c4" stroke-width="0.9" fill="none" opacity=".7"/>
    <path d="M684 226 L690 252" stroke="#b8a636" stroke-width="1.4" fill="none" stroke-dasharray="1.2 1.6" opacity=".9"/>
    <!-- necklace -->
    <path d="M661 214.5 Q668 220 674.5 213 " stroke="#3a2418" stroke-width="0.9" fill="none"/><circle cx="672" cy="217.4" r="1.3" fill="#5a241c"/>
    <!-- hair & face -->
    <ellipse cx="654.6" cy="191.6" rx="15.8" ry="15.2" fill="#1a1511" transform="rotate(-25 654.6 191.6)"/>
    <circle cx="643" cy="200" r="4" fill="#1a1511"/><circle cx="668" cy="184" r="4" fill="#1a1511"/><circle cx="649" cy="179" r="4" fill="#1a1511"/>
    <ellipse cx="656.8" cy="199.2" rx="10.4" ry="12.6" fill="#dca272" transform="rotate(-24 656.8 199.2)"/>
    <ellipse cx="655" cy="194.6" rx="6.5" ry="4" fill="#efc9a0" opacity=".75" transform="rotate(-24 655 194.6)"/>
    <path d="M654.4 202.6 Q659.6 206.4 663.2 200.2 Q659 202.6 654.4 202.6 Z" fill="#fbf3f0" stroke="#c24a62" stroke-width="1.2" stroke-linejoin="round"/>
    <path d="M648.6 195.6 L653 194 M657.8 192 L662 190.2" stroke="#3a2416" stroke-width="1.2" fill="none" stroke-linecap="round"/>
  </g>
</svg>

<svg class="a" id="flam" style="left:210px;top:559.3px" width="307.5" height="41.7" viewBox="210 559.3 307.5 41.7">
  <defs>
    <filter id="wf2" x="0" y="0" width="100%" height="100%" color-interpolation-filters="sRGB">
      <feTurbulence type="fractalNoise" baseFrequency="0.16 0.18" numOctaves="3" seed="11" result="n"/>
      <feColorMatrix in="n" type="matrix" values="1.6 0 0 0 -0.35  1.6 0 0 0 -0.35  1.6 0 0 0 -0.35  0 0 0 0 1" result="g"/>
      <feComponentTransfer in="g">
        <feFuncR type="table" tableValues="0.00 0.01 0.02 0.04 0.08 0.14"/>
        <feFuncG type="table" tableValues="0.14 0.20 0.27 0.34 0.44 0.56"/>
        <feFuncB type="table" tableValues="0.28 0.36 0.45 0.54 0.64 0.76"/>
      </feComponentTransfer>
    </filter>
    <linearGradient id="pk" x1="0" y1="0" x2="0" y2="1"><stop offset="0" stop-color="#fb9cb4"/><stop offset="1" stop-color="#f4708e"/></linearGradient>
    <clipPath id="fcp"><rect x="210" y="559.3" width="307.5" height="41.7"/></clipPath>
  </defs>
  <g clip-path="url(#fcp)">
    <rect x="210" y="559.3" width="307.5" height="41.7" fill="#0a4f82"/>
    <rect x="210" y="559.3" width="307.5" height="41.7" filter="url(#wf2)"/>
    <!-- body -->
    <path d="M236 604 Q240 590 262 586 Q300 588 330 584 Q356 581 380 585 Q396 588 402 604 Z" fill="url(#pk)"/>
    <path d="M366 596 Q368 576 384 573 Q398 572 398 586 Q398 598 392 604 L366 604 Z" fill="#f7809c"/>
    <path d="M372 590 Q376 578 388 577" stroke="#fcb4c6" stroke-width="1.5" fill="none"/>
    <rect x="330" y="585" width="22" height="7" fill="#e8788e" opacity=".7"/>
    <!-- neck arch / head -->
    <path d="M214 604 Q214 580 226 568 Q240 559 262 561 Q288 563 298 580 Q303 590 300 604 L262 604 Q268 592 262 584 Q252 578 244 586 Q238 594 240 604 Z" fill="#f98aa6"/>
    <path d="M222 596 Q222 574 240 566 Q262 560 284 572" stroke="#fdc0cf" stroke-width="2.2" fill="none" opacity=".9"/>
    <path d="M214 604 Q214 590 220 582 Q232 586 236 604 Z" fill="#f6e8ea"/>
    <path d="M226 604 Q230 594 236 590" stroke="#2a1a1a" stroke-width="1.4" fill="none"/>
    <circle cx="242.6" cy="577" r="3.2" fill="#e8b420"/><circle cx="243" cy="577" r="1.7" fill="#1a1010"/>
    <path d="M246 604 Q252 588 270 589 Q290 591 296 604 Z" fill="#f9a0b6"/><path d="M254 600 Q262 592 276 594" stroke="#fcc4d2" stroke-width="1.6" fill="none"/>
    <!-- magenta float, black, cyan -->
    <path d="M438 559 L494 559 L476 604 L421 604 Z" fill="#f522a8"/>
    <path d="M452 559 L436 604 M466 559 L450 604 M480 559 L463 604" stroke="#fb6cc8" stroke-width="3" fill="none" opacity=".8"/>
    <path d="M494 559 L506 559 L494 604 L476 604 Z" fill="#0c1018"/>
    <path d="M506 559 L518 559 L518 604 L494 604 Z" fill="#3cbcf0"/>
  </g>
</svg>


<!-- ======= signature popup ======= -->
<div class="a" style="left:751px;top:87px;width:32px;height:33px;background:#f0f1f4;border-radius:3px 3px 0 0;z-index:5"></div>
<div class="a" id="popup" style="left:751px;top:118.7px;width:230px;height:176px;background:#fff;border:1px solid #e6e8ec;border-radius:5px;z-index:5;box-shadow:0 2px 8px rgba(30,40,70,.08)"></div>
<div class="a" style="left:745px;top:82px;width:247px;height:38px;background:#fff;z-index:4"></div>
<div class="a" style="left:981px;top:126px;width:12px;height:168px;background:#f2f3f6;z-index:4"></div>
<svg class="ic" style="left:756px;top:90px;z-index:6" width="24" height="26" viewBox="0 0 24 26" fill="none" stroke="#2a2e36" stroke-width="1.5" stroke-linejoin="round" stroke-linecap="round">
  <path d="M2.4 20 L5.8 6.2 L12.8 4.2 L18.2 10 L15.6 16.4 Z"/><path d="M2.6 19.8 L9.6 12.8"/><circle cx="10.5" cy="12.2" r="1.5" fill="#2a2e36" stroke="none"/><path d="M14 2.4 L20.6 9.4"/>
  <path d="M2 22.8 Q6.6 24.2 11 22.8 T20 22.8" stroke="#4a73fb" stroke-width="1.5"/>
</svg>
<svg class="ic" style="left:799px;top:92px;z-index:6" width="24" height="22" viewBox="0 0 24 22" fill="none" stroke="#2a2e36" stroke-width="1.6" stroke-linejoin="round" stroke-linecap="round">
  <path d="M2.4 1.6 H21.6 Q22.4 1.6 22.4 2.4 V17.6 Q22.4 18.4 21.6 18.4 H14.4 L12 20.6 L9.6 18.4 H2.4 Q1.6 18.4 1.6 17.6 V2.4 Q1.6 1.6 2.4 1.6 Z"/><path d="M7 8 H17 M7 12.6 H17" stroke="#4a73fb" stroke-width="1.4"/>
</svg>
<svg class="a" role="img" aria-label="署名" style="left:765.50px;top:129.20px;z-index:6;" width="30.00" height="19.50" viewBox="-2 -14.30 30.00 19.50"><text class="jt" x="0" y="0" font-size="13" font-weight="bold" fill="#1a1a1a">署名</text></svg>
<svg class="ic" style="left:852.5px;top:163px;z-index:6" width="29" height="34" viewBox="0 0 29 34">
  <defs><linearGradient id="fg" x1="0" y1="0" x2="0" y2="1"><stop offset="0" stop-color="#d2d2d5"/><stop offset="1" stop-color="#8c8c91"/></linearGradient></defs>
  <path d="M0 0 H19 L28.4 9.4 V33.8 H0 Z" fill="url(#fg)"/><path d="M19 0 L28.4 9.4 H19 Z" fill="#e4e4e6"/>
  <path d="M8.6 21.8 L9.4 18.6 L16.2 12.4 Q17.2 11.6 18.2 12.6 Q19.2 13.6 18.2 14.6 L11.6 21 Z M13.6 22 Q15 19.6 16.6 21.2 Q17.6 22.4 19.8 21.4" fill="none" stroke="#e9e9eb" stroke-width="0.9" stroke-linejoin="round" stroke-linecap="round"/>
</svg>
<svg class="a" role="img" aria-label="作成した署名はここに表示されま" style="left:774.70px;top:200.20px;z-index:6;" width="184.00" height="18.00" viewBox="-2 -13.20 184.00 18.00"><text class="jt" x="0" y="0" font-size="12" fill="#858993">作成した署名はここに表示されま</text></svg>
<svg class="a" role="img" aria-label="す。" style="left:852.70px;top:216.30px;z-index:6;" width="28.00" height="18.00" viewBox="-2 -13.20 28.00 18.00"><text class="jt" x="0" y="0" font-size="12" fill="#858993">す。</text></svg>
<div class="a" style="left:767px;top:250px;width:198px;height:24px;border-radius:4px;background:#4a73fb;z-index:6"></div>
<svg class="a" role="img" aria-label="作成" style="left:852.00px;top:253.30px;z-index:6;" width="28.00" height="18.00" viewBox="-2 -13.20 28.00 18.00"><text class="jt" x="0" y="0" font-size="12" fill="#ffffff">作成</text></svg>

<!-- ======= red annotation overlay ======= -->
<svg class="a" id="anno" style="left:0;top:0;z-index:10" width="1081" height="601" viewBox="0 0 1081 601" fill="none">
  <rect x="354.75" y="42.35" width="65.6" height="42.9" rx="8.2" stroke="#ee1c25" stroke-width="4.9"/>
  <path d="M467.6 80.8 L688 191.1" stroke="#fb0a10" stroke-width="3.1"/>
  <path d="M701.8 198.4 L683.8 195.6 L688.8 184.8 Z" fill="#fb0a10"/>
  <rect x="744.5" y="80.4" width="248.1" height="213.2" rx="12.5" stroke="#ee1c25" stroke-width="4.9"/>
  <rect x="744.5" y="80.5" width="249.1" height="214" stroke="#1569d6" stroke-width="1.1"/>
  <rect x="744.5" y="80.5" width="249.1" height="214" stroke="#fff" stroke-width="1.3" stroke-dasharray="4 4" stroke-dashoffset="2"/>
  <g fill="#fff" stroke="#3c3c3c" stroke-width="1">
    <rect x="742.6" y="78.6" width="3.8" height="3.8"/><rect x="867.2" y="78.6" width="3.8" height="3.8"/><rect x="991.7" y="78.6" width="3.8" height="3.8"/>
    <rect x="742.6" y="185.6" width="3.8" height="3.8"/><rect x="991.7" y="185.6" width="3.8" height="3.8"/>
    <rect x="742.6" y="292.6" width="3.8" height="3.8"/><rect x="867.2" y="292.6" width="3.8" height="3.8"/><rect x="991.7" y="292.6" width="3.8" height="3.8"/>
  </g>
</svg>

</body>
</html>
